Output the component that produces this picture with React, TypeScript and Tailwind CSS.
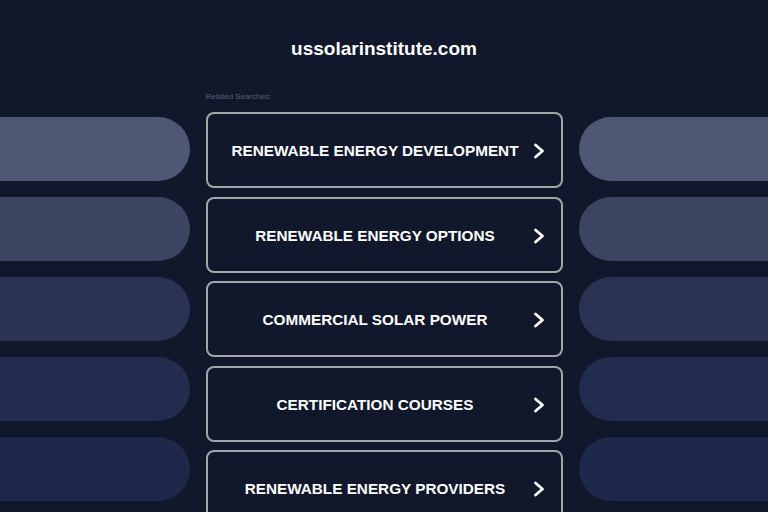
import React from "react";

const items = [
  "RENEWABLE ENERGY DEVELOPMENT",
  "RENEWABLE ENERGY OPTIONS",
  "COMMERCIAL SOLAR POWER",
  "CERTIFICATION COURSES",
  "RENEWABLE ENERGY PROVIDERS",
];

const pillColors = ["bg-[#4e5874]", "bg-[#3b4461]", "bg-[#2a3354]", "bg-[#222c4e]", "bg-[#1e284a]"];

function Chevron() {
  return (
    <svg width="12" height="16" viewBox="0 0 12 16" className="shrink-0">
      <path d="M2.5 2 L9.5 8 L2.5 14" fill="none" stroke="#ffffff" strokeWidth="2.8" strokeLinecap="round" strokeLinejoin="round" />
    </svg>
  );
}

export default function App() {
  return (
    <div
      className="w-[768px] h-[512px] overflow-hidden bg-[#11182b] text-white"
      style={{ fontFamily: '"Liberation Sans", Arial, sans-serif' }}
    >
      <div className="pt-[38px] text-center text-[19px] leading-[22px] font-bold">ussolarinstitute.com</div>
      <div className="mt-[32px] flex gap-[16px]">
        <div className="flex-1 pt-[25px] flex flex-col gap-[16px]">
          {pillColors.map((c, i) => (
            <div key={i} className={`h-[64px] rounded-r-[32px] ${c}`} />
          ))}
        </div>
        <div className="w-[357px] shrink-0">
          <div className="text-[8px] leading-[10px] text-[#56607a] mb-[10px]">Related Searches:</div>
          <div className="flex flex-col gap-[8.5px]">
            {items.map((t) => (
              <div
                key={t}
                className="h-[76px] rounded-[8px] border-2 border-[#a3a5ab] flex items-center pl-[14px] pr-[16px] pt-[2px]"
              >
                <span className="flex-1 text-center text-[15.3px] font-bold leading-[18px]">{t}</span>
                <span className="ml-[4px]"><Chevron /></span>
              </div>
            ))}
          </div>
        </div>
        <div className="flex-1 pt-[25px] flex flex-col gap-[16px]">
          {pillColors.map((c, i) => (
            <div key={i} className={`h-[64px] rounded-l-[32px] ${c}`} />
          ))}
        </div>
      </div>
    </div>
  );
}
